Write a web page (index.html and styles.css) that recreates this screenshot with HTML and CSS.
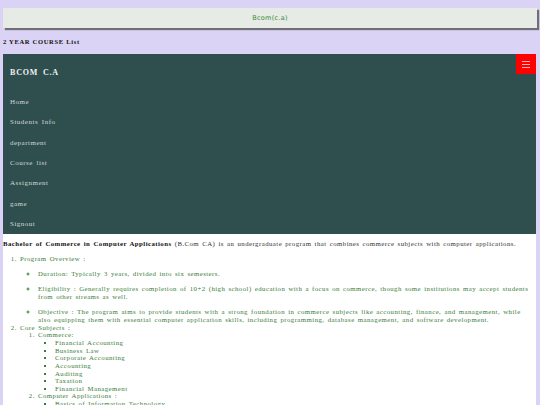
FILE: index.html
```html
<!DOCTYPE html>
<html>
<head>
<meta charset="utf-8">
<link rel="stylesheet" href="styles.css">
</head>
<body>
<div class="page">
  <header class="topbar">Bcom(c.a)</header>
  <h1 class="title">2 YEAR COURSE List</h1>
  <nav class="nav">
    <div class="brand">BCOM C.A</div>
    <button class="menu-btn" aria-label="menu">
      <svg width="8" height="7" viewBox="0 0 8 7"><g stroke="#ffb3b3" stroke-width="1"><line x1="0" y1="0.5" x2="8" y2="0.5"/><line x1="0" y1="3.5" x2="8" y2="3.5"/><line x1="0" y1="6.5" x2="8" y2="6.5"/></g></svg>
    </button>
    <a class="nav-link">Home</a>
    <a class="nav-link">Students Info</a>
    <a class="nav-link">department</a>
    <a class="nav-link">Course list</a>
    <a class="nav-link">Assignment</a>
    <a class="nav-link">game</a>
    <a class="nav-link">Signout</a>
  </nav>
  <main class="content">
    <p class="intro"><b>Bachelor of Commerce in Computer Applications</b> (B.Com CA) is an undergraduate program that combines commerce subjects with computer applications.</p>
    <ol class="main-list">
      <li>Program Overview :
        <ul class="overview">
          <li>Duration: Typically 3 years, divided into six semesters.</li>
          <li>Eligibility : Generally requires completion of 10+2 (high school) education with a focus on commerce, though some institutions may accept students from other streams as well.</li>
          <li>Objective : The program aims to provide students with a strong foundation in commerce subjects like accounting, finance, and management, while also equipping them with essential computer application skills, including programming, database management, and software development.</li>
        </ul>
      </li>
      <li>Core Subjects :
        <ol class="sub">
          <li>Commerce:
            <ul class="subjects">
              <li>Financial Accounting</li>
              <li>Business Law</li>
              <li>Corporate Accounting</li>
              <li>Accounting</li>
              <li>Auditing</li>
              <li>Taxation</li>
              <li>Financial Management</li>
            </ul>
          </li>
          <li>Computer Applications :
            <ul class="subjects">
              <li>Basics of Information Technology</li>
            </ul>
          </li>
        </ol>
      </li>
    </ol>
  </main>
</div>
</body>
</html>
```

FILE: styles.css
```css
html, body {
  margin: 0;
  padding: 0;
  background: #dbd3f5;
}
.page {
  padding: 8px 4px 0 3px;
  font-family: "Liberation Serif", "Times New Roman", serif;
}
.topbar {
  height: 20px;
  margin-right: -1px;
  background: #e6ebe5;
  box-shadow: 2px 2px 1px #6f6f78;
  display: flex;
  align-items: center;
  justify-content: center;
  font-family: "DejaVu Sans", Verdana, sans-serif;
  font-size: 6.5px;
  color: #3a8a3a;
  letter-spacing: 0.3px;
}
.title {
  margin: 0;
  height: 26px;
  display: flex;
  align-items: center;
  font-size: 6.5px;
  font-weight: bold;
  letter-spacing: 0.7px;
  color: #111;
}
.nav {
  position: relative;
  background: #2f4f4f;
  display: flex;
  flex-direction: column;
  height: 180px;
}
.brand {
  height: 38px;
  display: flex;
  align-items: center;
  padding-left: 7px;
  font-size: 8px;
  font-weight: bold;
  letter-spacing: 0.8px;
  word-spacing: 2px;
  color: #f2f2f2;
}
.menu-btn {
  position: absolute;
  top: 0;
  right: 0;
  width: 20px;
  height: 20px;
  border: none;
  padding: 0;
  background: #ff0000;
  display: flex;
  align-items: center;
  justify-content: center;
}
.nav-link {
  height: 20.3px;
  display: flex;
  align-items: center;
  padding-left: 7px;
  font-size: 7px;
  letter-spacing: 0.5px;
  word-spacing: 1.5px;
  color: #d4d8d8;
}
.content {
  background: #fff;
  height: 180px;
  overflow: hidden;
  padding-top: 6px;
  font-size: 6.8px;
  letter-spacing: 0.45px;
  word-spacing: 1px;
  line-height: 7.8px;
}
.intro {
  margin: 0;
  color: #333;
}
.intro b {
  color: #111;
}
.main-list {
  margin: 7px 0 0 0;
  padding-left: 17px;
  color: #3a7d3a;
}
.overview {
  list-style: circle;
  margin: 7px 0 0 0;
  padding-left: 18px;
}
.overview li {
  margin-bottom: 7.5px;
}
.overview li:last-child {
  margin-bottom: 0;
}
.sub {
  margin: 0;
  padding-left: 18px;
}
.subjects {
  list-style: square;
  margin: 0;
  padding-left: 17px;
  line-height: 7.6px;
}
```
